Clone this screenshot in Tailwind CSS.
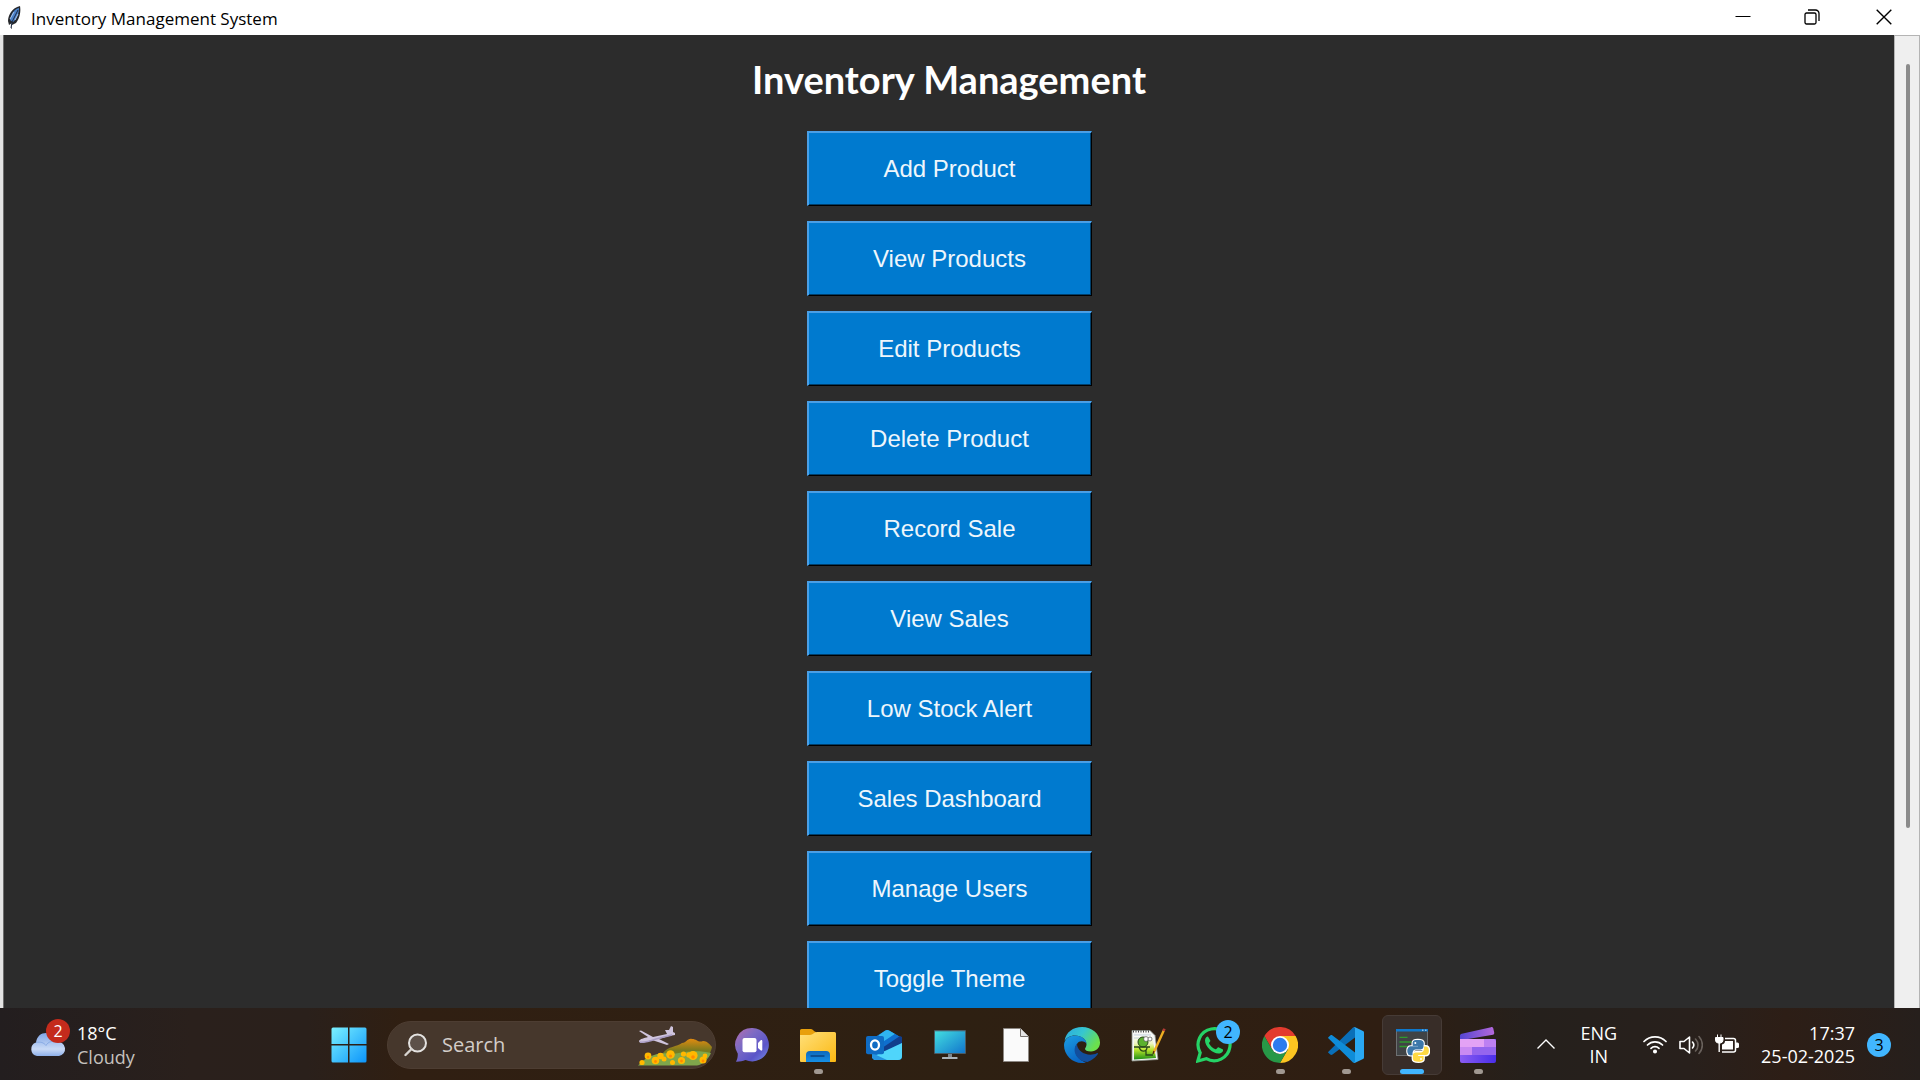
<!DOCTYPE html>
<html lang="en">
<head>
<meta charset="utf-8">
<title>Inventory Management System</title>
<script src="https://cdn.jsdelivr.net/npm/@tailwindcss/browser@4"></script>
</head>
<body class="flex h-screen flex-col overflow-hidden bg-[#2c2c2c] font-['Open_Sans',sans-serif]">

<!-- Title bar -->
<header class="flex h-[35px] shrink-0 items-center bg-white text-black">
  <svg class="ml-1.5 h-6 w-4" viewBox="0 0 16 24">
    <path d="M5 23 L6 17 L3 19 L2 15 C2 9 6 2 14 0 C15 5 14 12 10 17 L6 19 L5.600 23Z" fill="#26282c"/>
    <path d="M4 14 C5 8 8 3 13 2 C13 7 11 13 7 16Z" fill="#4a80c8"/>
    <path d="M5 22 L6 16 L12 4" stroke="#1c2a44" fill="none"/>
    <path d="M4 13 L8 6 M9 14 L12 8" stroke="#a9c4e8" fill="none"/>
  </svg>
  <h1 class="ml-[9px] pt-0.5 text-[17px] leading-6">Inventory Management System</h1>
  <div class="ml-auto flex h-full pb-0.5">
    <button aria-label="Minimise" class="flex w-[68px] items-center justify-center"><svg class="h-4 w-4" viewBox="0 0 16 16"><path d="M.5 7.500h15" stroke="#000"/></svg></button>
    <button aria-label="Restore" class="flex w-[70px] items-center justify-center"><svg class="h-4 w-4" viewBox="0 0 16 16" fill="none" stroke="#000" stroke-width="1.300"><rect x="1" y="4" width="11" height="11" rx="1.500"/><path d="M4 1h7.500a3.500 3.500 0 0 1 3.500 3.500V12"/></svg></button>
    <button aria-label="Close" class="flex w-[73px] items-center justify-center"><svg class="h-4 w-4" viewBox="0 0 16 16"><path d="M.7 .7l14.600 14.600M15.300 .7L.7 15.300" stroke="#000" stroke-width="1.400"/></svg></button>
  </div>
</header>

<!-- Application window -->
<div class="flex min-h-0 flex-1 border-l-3 border-[#e4e4e4]">
  <main class="flex min-w-0 flex-1 flex-col items-center overflow-hidden border-l border-[#6d6d6d] bg-[#2c2c2c] pt-5">
    <h2 class="mb-7 font-['Lato',sans-serif] text-[38px] leading-[48px] font-bold text-white">Inventory Management</h2>
    <nav class="flex w-[285px] flex-col gap-[15px] font-['Liberation_Sans',sans-serif] text-[24px] text-[#eef6fc]">
      <button class="h-[75px] shrink-0 border-t-2 border-r border-b border-l-2 border-t-[#4a9fe6] border-r-black border-b-black border-l-[#4a9fe6] bg-[#007acf] shadow-[inset_-1px_-1px_0_#003f6b]">Add Product</button>
      <button class="h-[75px] shrink-0 border-t-2 border-r border-b border-l-2 border-t-[#4a9fe6] border-r-black border-b-black border-l-[#4a9fe6] bg-[#007acf] shadow-[inset_-1px_-1px_0_#003f6b]">View Products</button>
      <button class="h-[75px] shrink-0 border-t-2 border-r border-b border-l-2 border-t-[#4a9fe6] border-r-black border-b-black border-l-[#4a9fe6] bg-[#007acf] shadow-[inset_-1px_-1px_0_#003f6b]">Edit Products</button>
      <button class="h-[75px] shrink-0 border-t-2 border-r border-b border-l-2 border-t-[#4a9fe6] border-r-black border-b-black border-l-[#4a9fe6] bg-[#007acf] shadow-[inset_-1px_-1px_0_#003f6b]">Delete Product</button>
      <button class="h-[75px] shrink-0 border-t-2 border-r border-b border-l-2 border-t-[#4a9fe6] border-r-black border-b-black border-l-[#4a9fe6] bg-[#007acf] shadow-[inset_-1px_-1px_0_#003f6b]">Record Sale</button>
      <button class="h-[75px] shrink-0 border-t-2 border-r border-b border-l-2 border-t-[#4a9fe6] border-r-black border-b-black border-l-[#4a9fe6] bg-[#007acf] shadow-[inset_-1px_-1px_0_#003f6b]">View Sales</button>
      <button class="h-[75px] shrink-0 border-t-2 border-r border-b border-l-2 border-t-[#4a9fe6] border-r-black border-b-black border-l-[#4a9fe6] bg-[#007acf] shadow-[inset_-1px_-1px_0_#003f6b]">Low Stock Alert</button>
      <button class="h-[75px] shrink-0 border-t-2 border-r border-b border-l-2 border-t-[#4a9fe6] border-r-black border-b-black border-l-[#4a9fe6] bg-[#007acf] shadow-[inset_-1px_-1px_0_#003f6b]">Sales Dashboard</button>
      <button class="h-[75px] shrink-0 border-t-2 border-r border-b border-l-2 border-t-[#4a9fe6] border-r-black border-b-black border-l-[#4a9fe6] bg-[#007acf] shadow-[inset_-1px_-1px_0_#003f6b]">Manage Users</button>
      <button class="h-[75px] shrink-0 border-t-2 border-r border-b border-l-2 border-t-[#4a9fe6] border-r-black border-b-black border-l-[#4a9fe6] bg-[#007acf] shadow-[inset_-1px_-1px_0_#003f6b]">Toggle Theme</button>
    </nav>
  </main>
  <!-- Scrollbar -->
  <div class="flex w-[26px] shrink-0 justify-center border border-b-0 border-[#b4b4b4] bg-[#efefef] pt-7 pb-[180px]">
    <div class="ml-px w-1 rounded-sm bg-[#8b8b8b]"></div>
  </div>
</div>

<!-- Taskbar -->
<footer class="flex h-[72px] shrink-0 items-center bg-[linear-gradient(to_right,#231e1f,#2a201c_10%,#2a201b_16%,#301f12_21%,#2e2012_50%,#2f1e12_72%,#25201c_80%,#28201c_88%,#2d1e16_93%,#261f1c)] pt-0.5">
  <div class="flex w-[318px] shrink-0 items-center pl-[30px]">
    <div class="relative">
      <svg class="h-9 w-9" viewBox="0 0 36 36">
        <defs><linearGradient id="cl" x1="0" y1="0" x2="0" y2="1"><stop offset="0" stop-color="#7fa5e6"/><stop offset=".7" stop-color="#c9daf6"/><stop offset="1" stop-color="#8eb0ea"/></linearGradient></defs>
        <path d="M7 29a7 7 0 0 1-1-13.500C7 9 11 6 16 6c6 0 10 4 11 9a7 7 0 0 1 2 14Z" fill="url(#cl)"/>
        <path d="M6 15.500c4-1 8 0 10 3 2-4 7-5 11-3.500" fill="none" stroke="#7299dc" stroke-opacity=".6"/>
      </svg>
      <span class="absolute -top-2 left-4 flex h-6 w-6 items-center justify-center rounded-full bg-[#c42b1c] text-[16px] text-white">2</span>
    </div>
    <p class="ml-[11px] text-[18px] leading-6 text-white">18°C<br><span class="text-[#c5c1be]">Cloudy</span></p>
  </div>

  <button aria-label="Start" class="ml-px flex h-[60px] w-[60px] shrink-0 items-center justify-center">
    <svg class="h-9 w-9" viewBox="0 0 36 36">
      <defs><linearGradient id="wn" gradientUnits="userSpaceOnUse" x1="0" y1="0" x2="36" y2="36"><stop offset="0" stop-color="#7df3ff"/><stop offset="1" stop-color="#0a93fb"/></linearGradient></defs>
      <path d="M2 .5h15v16.500H.5V2A1.500 1.500 0 0 1 2 .5Zm16.500 0H34A1.500 1.500 0 0 1 35.500 2v15h-17ZM.5 18.500H17v17H2A1.500 1.500 0 0 1 .5 34Zm18 0h17V34a1.500 1.500 0 0 1-1.500 1.500H18.500Z" fill="url(#wn)"/>
    </svg>
  </button>

  <label class="ml-2 flex h-12 w-[329px] shrink-0 items-center overflow-hidden rounded-full border border-[#4d3d32] bg-[#46372c] pl-4">
    <svg class="h-6 w-6 shrink-0" viewBox="0 0 24 24"><circle cx="13.500" cy="10" r="8.500" fill="#5d5149" stroke="#e4e2e0" stroke-width="2"/><path d="M7.500 16L1.500 22" stroke="#d8d4d0" stroke-width="2.400" stroke-linecap="round"/></svg>
    <input aria-label="Search" type="text" placeholder="Search" class="ml-[14px] w-0 min-w-0 flex-1 bg-transparent text-[20px] text-[#d3cdc9] outline-none placeholder:text-[#d3cdc9]">
    <svg class="mr-0.5 h-[46px] w-[76px] shrink-0" viewBox="0 0 76 46">
      <defs><linearGradient id="hl" x1="0" y1="0" x2="0" y2="1"><stop offset="0" stop-color="#e08a10"/><stop offset=".5" stop-color="#7a7b1e"/><stop offset="1" stop-color="#5f8a3c"/></linearGradient></defs>
      <path d="M26 31c5-7 14-6 19-10 5 0 5-5 10-4 5 0 6 4 11 2 5 0 8 5 9 6-1 7-7 13-13 15H24Z" fill="url(#hl)"/>
      <path d="M1 43.500C9 34 22 29 36 32c14-3 26-4 38-1-2 5-8 12-14 12.500Z" fill="#7fa64b"/>
      <g fill="#ffb800"><circle cx="5" cy="40.500" r="2.600"/><circle cx="11" cy="34" r="3.400"/><circle cx="18.500" cy="38.500" r="3.800"/><circle cx="23.500" cy="34" r="3.200"/><circle cx="27" cy="37" r="2.500"/><circle cx="33.500" cy="32.500" r="4.300"/><circle cx="35.500" cy="40.500" r="2.500"/><circle cx="44.500" cy="38.500" r="3.600"/><circle cx="46.500" cy="32" r="2.600"/><circle cx="52" cy="33" r="2.800"/><circle cx="56" cy="33.500" r="4.600"/><circle cx="66" cy="38" r="3.500"/><circle cx="68" cy="34" r="2.400"/></g>
      <g fill="#ff8a00"><circle cx="11" cy="35" r="1.200"/><circle cx="18.500" cy="39.500" r="1.400"/><circle cx="33.500" cy="34" r="1.600"/><circle cx="44.500" cy="39" r="1.400"/><circle cx="56" cy="35" r="1.800"/><circle cx="66" cy="39" r="1.400"/></g>
      <path d="M2 9l2-.5L16 15l14-3-2-4 4 0 2-4 2 1 0 5 2 1v2l-6 1-10 3 10 5-2 1-15-5-9 3c-3 0-4-1-4-2 1-2 5-3 9-4Z" fill="#cfc4dd"/>
      <path d="M3 20c3 1 10-1 16-3l16-4" fill="none" stroke="#a99cc4" stroke-width="1.500"/>
    </svg>
  </label>

  <nav aria-label="Pinned apps" class="ml-[6px] flex shrink-0 gap-1.5">
    <button aria-label="Chat" class="flex h-[60px] w-[60px] items-center justify-center">
      <svg class="h-9 w-9" viewBox="0 0 36 36">
        <defs><linearGradient id="ch" x1="0" y1="0" x2="1" y2="1"><stop offset="0" stop-color="#b56cae"/><stop offset=".35" stop-color="#7d6bc4"/><stop offset=".7" stop-color="#5a55c8"/><stop offset="1" stop-color="#7a93e8"/></linearGradient></defs>
        <path d="M18.500 1a16.700 16.700 0 1 1-7 32c-3 1.300-6 1.800-9.500 1.700 1.400-2.500 1.800-5 1.800-8A16.700 16.700 0 0 1 18.500 1Z" fill="url(#ch)"/>
        <rect x="8.500" y="11" width="14" height="14.300" rx="2" fill="#fff"/><path d="M24 16l2.500-2.600c.8-.8 1.800-.4 1.800.7v8.500c0 1-1 1.400-1.800.7L24 21Z" fill="#fff"/>
      </svg>
    </button>
    <button aria-label="File Explorer" class="relative flex h-[60px] w-[60px] items-center justify-center">
      <svg class="h-9 w-9" viewBox="0 0 36 36">
        <defs><linearGradient id="fe" x1="0" y1="0" x2="1" y2="1"><stop offset="0" stop-color="#ffe07a"/><stop offset="1" stop-color="#fbb812"/></linearGradient><linearGradient id="fb" x1="0" y1="0" x2="0" y2="1"><stop offset="0" stop-color="#0f68ba"/><stop offset="1" stop-color="#1590e6"/></linearGradient></defs>
        <path d="M0 3.500A1.500 1.500 0 0 1 1.500 2H11c2 0 3 3 5 3v10H0Z" fill="#e8a00c"/>
        <path d="M0 8h10c3 0 4-3 7-3h17.500A1.500 1.500 0 0 1 36 6.500V34a1 1 0 0 1-1 1H1a1 1 0 0 1-1-1Z" fill="url(#fe)"/>
        <path d="M6 35v-7a4 4 0 0 1 4-4h16a4 4 0 0 1 4 4v7Z" fill="url(#fb)"/><path d="M11 29h13" stroke="#0a4380" stroke-width="1.300" stroke-linecap="round"/>
      </svg>
      <span class="absolute bottom-px left-[26px] h-[5px] w-[9px] rounded-full bg-[#a09891]"></span>
    </button>
    <button aria-label="Outlook" class="flex h-[60px] w-[60px] items-center justify-center">
      <svg class="h-9 w-9" viewBox="0 0 36 36">
        <path d="M6 12L19 3.800c1.500-1 3-1 4.500 0L36 11v18a4 4 0 0 1-4 4H10a4 4 0 0 1-4-4Z" fill="#1479d3"/>
        <path d="M13 8l6-4.200c1.500-1 3-1 4.500 0L29 7 12 19Z" fill="#2fb5f0"/>
        <path d="M29 7l5 3L16 23l-4-5Z" fill="#0f6fce"/>
        <path d="M36 10v6L20 26l-4-5 18-12Z" fill="#113e8c"/>
        <path d="M36 16v13a4 4 0 0 1-4 4H10c-2 0-3.500-1.500-4-3Z" fill="#4fd5fb"/><path d="M6 26l15 7H10a4 4 0 0 1-4-4Z" fill="#2493e0"/>
        <rect y="9" width="18" height="18.300" rx="2" fill="#0f6cc4"/><ellipse cx="9" cy="18" rx="4" ry="4.700" fill="none" stroke="#fff" stroke-width="2.300"/>
      </svg>
    </button>
    <button aria-label="This PC" class="flex h-[60px] w-[60px] items-center justify-center">
      <svg class="h-9 w-9" viewBox="0 0 36 36">
        <defs><linearGradient id="pc" x1="0" y1="0" x2="1" y2="1"><stop offset="0" stop-color="#42dde0"/><stop offset="1" stop-color="#1276cc"/></linearGradient></defs>
        <rect x="2" y="3" width="32" height="24" rx="1" fill="#4a5c66"/><rect x="3" y="4.300" width="30" height="21.700" fill="url(#pc)"/><path d="M16 27h4v3.500h-4Z" fill="#7e868c"/><rect x="10" y="30" width="15.500" height="2" rx=".6" fill="#aab2b8"/>
      </svg>
    </button>
    <button aria-label="Document" class="flex h-[60px] w-[60px] items-center justify-center">
      <svg class="h-9 w-9" viewBox="0 0 36 36"><path d="M5.500 1.500H22.500L30.500 9.500V34.500H5.500Z" fill="#fafafa" stroke="#8d8883"/><path d="M22.500 1.500V9.500H30.500" fill="#e6e6e6" stroke="#77726e"/></svg>
    </button>
    <button aria-label="Edge" class="flex h-[60px] w-[60px] items-center justify-center">
      <svg class="h-9 w-9" viewBox="0 0 36 36">
        <defs><linearGradient id="e1" x1="0" y1="0" x2="1" y2=".5"><stop offset="0" stop-color="#2aa9e0"/><stop offset=".5" stop-color="#36c6d0"/><stop offset="1" stop-color="#6be04c"/></linearGradient><linearGradient id="e2" x1="0" y1="0" x2=".5" y2="1"><stop offset="0" stop-color="#1b9de2"/><stop offset="1" stop-color="#0a66c4"/></linearGradient></defs>
        <path d="M.5 14C2 5 9 0 18 0c10 0 18 7 18 15.500 0 5.500-4 9-9 9-4 0-6-1.500-6-2.500s1.500-2 1.500-4.500C22.500 12 17 8.500 11 8.500 6 8.500 2 11 .5 14Z" fill="url(#e1)"/>
        <path d="M0 18C.5 12 5 8.500 11 8.500c6 0 11.500 3.500 11.500 8.500-1-3-7.500-4-9.500 0-5 7 1 16 9 18.500-1.500.4-3 .5-4 .5C8 36 0 28 0 18Z" fill="url(#e2)"/>
        <path d="M13 16.500c-6 7 0 18 10.500 18.500C28 33.500 32 30 33.800 27c.4-.8-.2-1.200-1-.8-8 4-20-.7-19.800-9.700Z" fill="#124f9e"/>
      </svg>
    </button>
    <button aria-label="Notepad++" class="flex h-[60px] w-[60px] items-center justify-center">
      <svg class="h-9 w-9" viewBox="0 0 36 36">
        <defs><linearGradient id="np" x1="0" y1="0" x2="0" y2="1"><stop offset="0" stop-color="#fff"/><stop offset=".35" stop-color="#eef6c0"/><stop offset=".6" stop-color="#b9e52c"/><stop offset="1" stop-color="#1f8f18"/></linearGradient></defs>
        <path d="M2 3.500h18l5 5 3 24L2 34Z" fill="#f5f7f5" stroke="#8b948b" stroke-width=".8"/><path d="M4 8h18l4 23L4 32.500Z" fill="url(#np)"/>
        <path d="M3 4.500h17" stroke="#444" stroke-width="2" stroke-dasharray="1 1.500"/><path d="M4 8h17M4 11h18" stroke="#a9bed2" stroke-width=".7"/>
        <circle cx="13" cy="15" r="5" fill="#5bb12e" stroke="#26451a"/><circle cx="16" cy="12" r="2.400" fill="#fff" stroke="#555" stroke-width=".7"/><circle cx="20" cy="12" r="2" fill="#fff" stroke="#555" stroke-width=".7"/>
        <path d="M4 20h16M9 20c2 6 8 5 8 0M16 23v5h7" fill="none" stroke="#27471a" stroke-width="1.300"/>
        <path d="M34 3L23.500 26" stroke="#efae22" stroke-width="2.400"/><path d="M34.500 1.700L33.500 4" stroke="#b33a35" stroke-width="2.600"/><path d="M24 24l-1 3" stroke="#473012" stroke-width="1.300"/>
      </svg>
    </button>
    <button aria-label="WhatsApp" class="relative flex h-[60px] w-[60px] items-center justify-center">
      <svg class="h-9 w-9" viewBox="0 0 36 36">
        <path d="M1.800 34l2.400-8.300A16 16 0 1 1 10.300 31.700Z" fill="none" stroke="#25d366" stroke-width="3.200"/>
        <path d="M12 9.500c-1-.2-3 1.300-3 4 0 6 7.500 13 13.500 13 3 0 5-2 4.500-4l-4.500-2.300c-.8-.3-2 2.200-3 2-3-1-5.500-3.700-6.500-6 0-.8 1.600-1.600 1.300-2.600Z" fill="#25d366"/>
      </svg>
      <span class="absolute top-[5px] left-8 flex h-6 w-6 items-center justify-center rounded-full bg-[#41b6ff] text-[16px] text-black">2</span>
    </button>
    <button aria-label="Chrome" class="relative flex h-[60px] w-[60px] items-center justify-center">
      <svg class="h-9 w-9" viewBox="0 0 36 36">
        <path d="M2.400 9A18 18 0 0 1 33.600 9H18L10.200 22.500Z" fill="#e33b2e"/><path d="M33.600 9A18 18 0 0 1 18 36l7.800-13.500L18 9Z" fill="#fcc521"/><path d="M18 36A18 18 0 0 1 2.400 9l7.800 13.500c3 5 10 7 15.600 0Z" fill="#279847"/>
        <circle cx="18" cy="18" r="9" fill="#fff"/><circle cx="18" cy="18" r="7.200" fill="#2d7bee"/>
      </svg>
      <span class="absolute bottom-px left-[26px] h-[5px] w-[9px] rounded-full bg-[#a09891]"></span>
    </button>
    <button aria-label="Visual Studio Code" class="relative flex h-[60px] w-[60px] items-center justify-center">
      <svg class="h-9 w-9" viewBox="0 0 36 36">
        <path d="M.6 24.500L25 .6 27 0v10.500L4.500 27.500c-.8.600-1.600.500-2.200 0L.6 26c-.7-.5-.7-1 0-1.500Z" fill="#0a6fb8"/>
        <path d="M.6 11.500L25 35.400l2 .6V25.500L4.500 8.500c-.8-.6-1.600-.5-2.200 0L.6 10c-.7.500-.7 1 0 1.500Z" fill="#0f8cd8"/>
        <path d="M25 .6c.7-.7 1.500-.7 2.200-.4L35 4c.7.300 1 .8 1 1.500v25c0 .7-.3 1.200-1 1.500l-7.800 3.800c-.7.300-1.500.3-2.200-.4 1 .6 2 .2 2-1.200V1.800c0-1.400-1-1.800-2-1.200Z" fill="#2aa8f2"/>
      </svg>
      <span class="absolute bottom-px left-[26px] h-[5px] w-[9px] rounded-full bg-[#a09891]"></span>
    </button>
    <button aria-label="Python" class="relative flex h-[60px] w-[60px] items-center justify-center rounded-md border border-[#463b36] bg-[#382d28]">
      <svg class="h-9 w-9" viewBox="0 0 36 36">
        <rect x="2.500" y="2.500" width="31" height="26" fill="#404345" stroke="#6d7072"/><path d="M2 2h32v2.500H2Z" fill="#0f78cc"/><path d="M28 3.200h1.500M31 3.200h1.500" stroke="#fff" stroke-width=".8"/>
        <path d="M5.500 10.300h8M5.500 15h12M5.500 19.500h8" stroke="#2f9a2e" stroke-width="1.300"/>
        <g stroke="#fff" stroke-width="2.600" stroke-linejoin="round" paint-order="stroke">
          <path d="M23.800 13c-3.700 0-5 1.200-5 3v2.700h5.400v.9h-7.500c-2 0-3.200 1.700-3.200 4.300s1.200 4.400 3 4.400h2V25.500c0-1.800 1.500-3.200 3.200-3.200h5c1.600 0 2.800-1.200 2.800-2.800V16c0-1.800-1.700-3-5.700-3Z" fill="#3d78aa"/>
          <path d="M24.600 34.700c3.700 0 5-1.200 5-3V29h-5.400v-.9h7.500c2 0 3.200-1.700 3.200-4.300s-1.200-4.400-3-4.400h-2v2.800c0 1.800-1.500 3.200-3.200 3.200h-5c-1.600 0-2.800 1.200-2.800 2.800v3.500c0 1.800 1.700 3 5.700 3Z" fill="#ffd943"/>
        </g>
        <path d="M23.800 13c-3.700 0-5 1.200-5 3v2.700h5.400v.9h-7.500c-2 0-3.200 1.700-3.200 4.300s1.200 4.400 3 4.400h2V25.500c0-1.800 1.500-3.200 3.200-3.200h5c1.600 0 2.800-1.200 2.800-2.800V16c0-1.800-1.700-3-5.700-3Z" fill="#3d78aa"/>
        <circle cx="21.300" cy="15.900" r="1" fill="#fff"/><circle cx="27" cy="31.900" r="1" fill="#fff"/>
      </svg>
      <span class="absolute bottom-0 left-[17px] h-[5px] w-6 rounded-full bg-[#41b6ff]"></span>
    </button>
    <button aria-label="Clipchamp" class="relative flex h-[60px] w-[60px] items-center justify-center">
      <svg class="h-9 w-9" viewBox="0 0 36 36">
        <defs><linearGradient id="c1" x1="0" y1="0" x2="1" y2="0"><stop offset="0" stop-color="#5646d2"/><stop offset="1" stop-color="#b368dc"/></linearGradient><linearGradient id="c2" x1="0" y1="0" x2="1" y2="0"><stop offset="0" stop-color="#8a5cf2"/><stop offset="1" stop-color="#4a2eea"/></linearGradient></defs>
        <path d="M0 9c0-1.200.6-2 1.800-2.300L31 .2c1.200-.3 2 .3 2.300 1.300l.9 4c.2 1-.3 2-1.300 2.200L8 12H0Z" fill="url(#c1)"/>
        <path d="M0 12h36v22a2 2 0 0 1-2 2H2a2 2 0 0 1-2-2Z" fill="url(#c2)"/><path d="M0 12h24v8H0Z" fill="#e3a2f5"/><path d="M24 12h10a2 2 0 0 1 2 2v6H24Z" fill="#bd80f2"/><path d="M0 20h12v8H0Z" fill="#c98af2"/><path d="M12 20h24v8H12Z" fill="#9565ee"/>
      </svg>
      <span class="absolute bottom-px left-[26px] h-[5px] w-[9px] rounded-full bg-[#a09891]"></span>
    </button>
  </nav>

  <!-- System tray -->
  <div class="ml-auto flex shrink-0 items-center pr-[29px] text-[18px] leading-[23px] text-white">
    <button aria-label="Show hidden icons"><svg class="h-5 w-5" viewBox="0 0 20 20"><path d="M1.500 13.500L10 5l8.500 8.500" fill="none" stroke="#fff" stroke-width="1.400"/></svg></button>
    <button class="ml-6 text-center">ENG<br>IN</button>
    <div class="ml-[26px] flex gap-3">
      <svg class="h-6 w-6" viewBox="0 0 24 24" fill="none" stroke="#fff" stroke-width="1.700" stroke-linecap="round"><path d="M1 8.500a15.500 15.500 0 0 1 22 0M4.500 12a10.600 10.600 0 0 1 15 0M8 15.300a5.700 5.700 0 0 1 8 0"/><circle cx="12" cy="18.500" r="1.200" fill="#fff"/></svg>
      <svg class="h-6 w-6" viewBox="0 0 24 24" fill="none" stroke="#fff" stroke-width="1.600" stroke-linejoin="round" stroke-linecap="round"><path d="M1 8.500h4L10.500 4v16L5 15.500H1Z"/><path d="M13.500 9a4.500 4.500 0 0 1 0 6"/><path d="M16.500 6a8.500 8.500 0 0 1 0 12M20 3.500a12.500 12.500 0 0 1 0 17" stroke="#69615c"/></svg>
      <svg class="h-6 w-6" viewBox="0 0 24 24"><path d="M2.500 1.500v3M6 1.500v3M.5 4.500h7.500v2.500a3 3 0 0 1-2.500 3H3a3 3 0 0 1-2.500-3Z" fill="#fff" stroke="#fff"/><path d="M4.200 10v9" stroke="#fff" stroke-width="1.400"/><path d="M10 5.500h8.500a2 2 0 0 1 2 2v9.500a2 2 0 0 1-2 2H7" fill="none" stroke="#fff" stroke-width="1.500"/><path d="M10 8h8v8.500H7v-5c2-.5 3-1.500 3-3.500Z" fill="#fff"/><path d="M21 9.500h1.500A1.500 1.500 0 0 1 24 11v2.500a1.500 1.500 0 0 1-1.500 1.500H21Z" fill="#fff"/></svg>
    </div>
    <time datetime="2025-02-25T17:37" class="ml-[22px] text-right">17:37<br>25-02-2025</time>
    <span class="ml-3 flex h-6 w-6 items-center justify-center rounded-full bg-[#41b6ff] text-[16px] text-black">3</span>
  </div>
</footer>
</body>
</html>
